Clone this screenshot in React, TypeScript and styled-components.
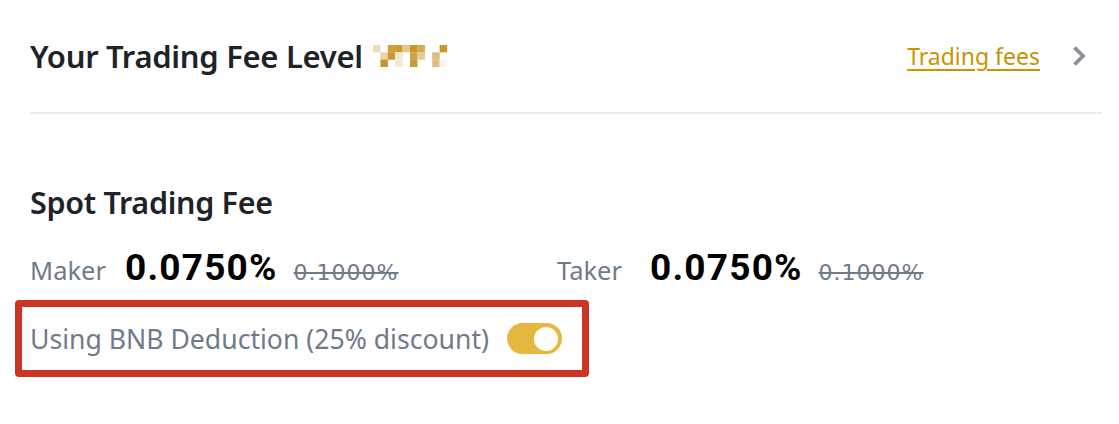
import React from "react";
import styled, { createGlobalStyle } from "styled-components";

const Global = createGlobalStyle`
  html, body { margin: 0; padding: 0; background: #ffffff; }
  body { font-family: "Noto Sans", "Open Sans", Arial, sans-serif; -webkit-font-smoothing: antialiased; }
`;

const Card = styled.div`
  width: 1119px;
  height: 424px;
  box-sizing: border-box;
  padding: 0 17px 0 30px;
  background: #fff;
  overflow: hidden;
`;

const Header = styled.div`
  display: flex;
  align-items: center;
  justify-content: space-between;
  height: 114px;
  border-bottom: 2px solid #eaecef;
  box-sizing: border-box;
`;

const TitleWrap = styled.div`
  display: flex;
  align-items: center;
  gap: 10px;
`;

const Title = styled.h1`
  margin: 0;
  font-size: 31px;
  font-weight: 600;
  color: #1e2329;
  letter-spacing: -0.3px;
`;

const LinkWrap = styled.div`
  display: flex;
  align-items: center;
  gap: 32px;
  padding-right: 16px;
`;

const FeeLink = styled.a`
  font-size: 23px;
  color: #c99400;
  text-decoration: underline;
  text-decoration-thickness: 2px;
  text-underline-offset: 4px;
  cursor: pointer;
`;

const Section = styled.div`
  padding-top: 70px;
`;

const SectionTitle = styled.h2`
  margin: 0;
  font-size: 30.5px;
  font-weight: 600;
  color: #1e2329;
  letter-spacing: -0.3px;
  line-height: 36px;
`;

const FeeRow = styled.div`
  display: flex;
  align-items: baseline;
  margin-top: 26px;
`;

const FeeGroup = styled.div<{ $width?: number }>`
  display: flex;
  align-items: baseline;
  width: ${(p) => (p.$width ? `${p.$width}px` : "auto")};
`;

const Label = styled.span<{ $gap: number }>`
  font-size: 25.5px;
  color: #707a8a;
  margin-right: ${(p) => p.$gap}px;
`;

const Value = styled.span`
  font-family: Roboto, "Liberation Sans", sans-serif;
  font-size: 37px;
  font-weight: 700;
  color: #000;
  letter-spacing: 1.2px;
  margin-right: 16px;
`;

const OldValue = styled.span`
  font-family: "DejaVu Sans", Roboto, sans-serif;
  font-size: 22px;
  letter-spacing: 1px;
  color: #707a8a;
  text-decoration: line-through;
  text-decoration-thickness: 1.5px;
`;

const Highlight = styled.div`
  display: inline-flex;
  align-items: center;
  gap: 18px;
  margin-top: 11px;
  margin-left: -15px;
  padding: 0 20px 0 8px;
  height: 77px;
  box-sizing: border-box;
  border: 7px solid #cb3523;
  border-radius: 4px;
`;

const ToggleLabel = styled.span`
  font-size: 26.6px;
  color: #707a8a;
`;

const Toggle = styled.div`
  position: relative;
  width: 55px;
  height: 31px;
  border-radius: 16px;
  background: #e6b73f;
  flex-shrink: 0;
`;

const Knob = styled.div`
  position: absolute;
  top: 3.5px;
  right: 4px;
  width: 24px;
  height: 24px;
  border-radius: 50%;
  background: #fff;
`;

const cells: [number, number, string][] = [
  [0, 0, "#f1dcbc"],
  [2, 0, "#cfa03a"],
  [3, 0, "#c99b2e"],
  [4, 0, "#e4c98c"],
  [5, 0, "#c69628"],
  [6, 0, "#d4ab50"],
  [9, 0, "#cc9a2a"],
  [1, 1, "#ecd3a4"],
  [2, 1, "#c99a2c"],
  [3, 1, "#f5e6cf"],
  [5, 1, "#cda145"],
  [6, 1, "#e6c98e"],
  [8, 1, "#dcbe80"],
  [1, 2, "#c7962a"],
  [3, 2, "#f5e8d5"],
  [5, 2, "#c99c35"],
  [8, 2, "#dcbe80"],
  [9, 2, "#f7f2ea"],
];

const Pixels = () => (
  <svg width="75" height="22" viewBox="0 0 75 22" aria-hidden>
    {cells.map(([x, y, c], i) => (
      <rect key={i} x={x * 7.4} y={y * 7.3} width="7.5" height="7.4" fill={c} />
    ))}
  </svg>
);

const Chevron = () => (
  <svg width="14" height="22" viewBox="0 0 14 22" aria-hidden>
    <path d="M2.5 2.5 L11 11 L2.5 19.5" fill="none" stroke="#8a8f99" strokeWidth="3.8" />
  </svg>
);

export default function App() {
  return (
    <>
      <Global />
      <Card>
        <Header>
          <TitleWrap>
            <Title>Your Trading Fee Level</Title>
            <Pixels />
          </TitleWrap>
          <LinkWrap>
            <FeeLink>Trading fees</FeeLink>
            <Chevron />
          </LinkWrap>
        </Header>
        <Section>
          <SectionTitle>Spot Trading Fee</SectionTitle>
          <FeeRow>
            <FeeGroup $width={527}>
              <Label $gap={19}>Maker</Label>
              <Value>0.0750%</Value>
              <OldValue>0.1000%</OldValue>
            </FeeGroup>
            <FeeGroup>
              <Label $gap={28}>Taker</Label>
              <Value>0.0750%</Value>
              <OldValue>0.1000%</OldValue>
            </FeeGroup>
          </FeeRow>
          <Highlight>
            <ToggleLabel>Using BNB Deduction (25% discount)</ToggleLabel>
            <Toggle>
              <Knob />
            </Toggle>
          </Highlight>
        </Section>
      </Card>
    </>
  );
}
